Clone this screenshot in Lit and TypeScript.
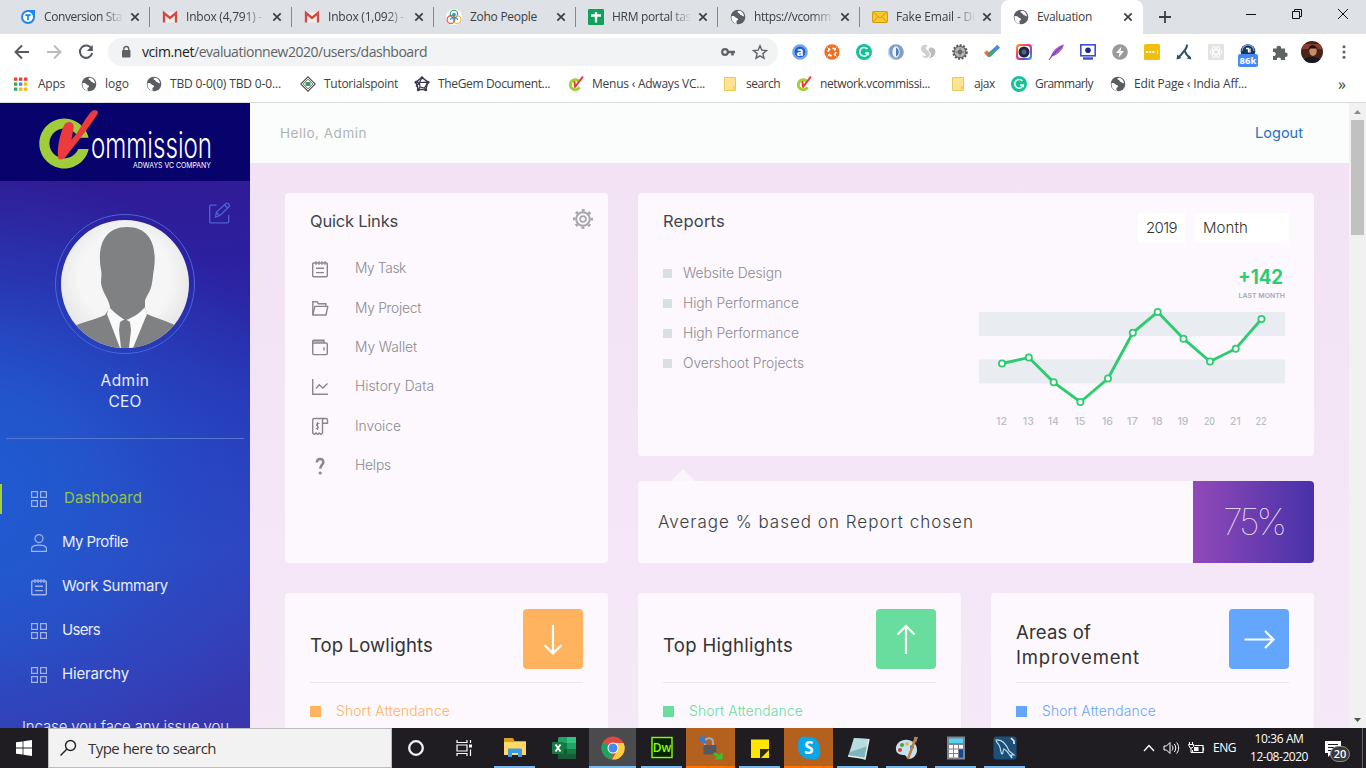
import { LitElement, html, svg, css } from "lit";
import { customElement, property } from "lit/decorators.js";

/* A single-line label whose tracking is computed so that it fills a given width. */
@customElement("fit-text")
class FitText extends LitElement {
  static styles = css`
    :host { display: inline-block; white-space: pre; line-height: 20px; flex: none; }
    .t { display: inline-block; }
  `;
  @property() text = "";
  @property({ type: Number }) w = 0;
  render() {
    return html`<span class="t">${this.text}</span>`;
  }
  updated() {
    const el = this.renderRoot.querySelector(".t") as HTMLElement;
    el.style.letterSpacing = "0px";
    const natural = el.getBoundingClientRect().width;
    if (this.w) el.style.letterSpacing = `${(this.w - natural) / this.text.length}px`;
  }
}

const fit = (text: string, w: number, cls = "") =>
  html`<fit-text class=${cls} .text=${text} .w=${w}></fit-text>`;
const icon = (w: number, h: number, body: unknown, cls = "") =>
  html`<svg class=${cls} width=${w} height=${h} viewBox="0 0 ${w} ${h}" fill="none">${body}</svg>`;

/* ---- favicons, 16px ---- */
const globe = svg`<circle cx="8" cy="8" r="7.3" fill="#5a5e63"/><path d="M1.500 7.200c2-.6 3.400.3 4.200 1.200.8.900 2.300.5 2.300 1.800s-1.600 1-1.600 2.200c0 .900.6 1.600.2 2.600-3-.6-5-3.200-5.100-6z" fill="#fff"/><path d="M8 2c-1 .8-.3 1.700.8 2 1.200.3.6 1.700 2 1.900 1.300.2 1.500 1.300 3.200 1.300-.2-2.600-2-4.700-4.300-5.400z" fill="#fff"/>`;
const tblue = svg`<path d="M1 8a7 7 0 0 1 7-7h7v7A7 7 0 1 1 1 8z" fill="#1b87f5"/><circle cx="8" cy="8" r="5" fill="#fff"/><path d="M5.300 6.200h5.400M8 6.200v5" stroke="#1b87f5" stroke-width="1.700"/>`;
const gmail = svg`<path d="M1 3h14v10.500H1z" fill="#efefef"/><path d="M2 13.500V4l6 5 6-5v9.500" stroke="#d5483d" stroke-width="2.300"/>`;
const zoho = svg`<circle cx="8" cy="8" r="8" fill="#fff"/><circle cx="8" cy="5" r="3.700" stroke="#2e9f5d" stroke-width="1.100"/><circle cx="5" cy="10.500" r="3.900" stroke="#e0534f" stroke-width="1.100"/><circle cx="11" cy="10.500" r="3.900" stroke="#efbf42" stroke-width="1.100"/><circle cx="8" cy="5.500" r="1.700" fill="#3889cf"/><path d="M4.500 11c0-3 7-3 7 0M8 7v6" stroke="#3889cf" stroke-width="1.100"/>`;
const sheet = svg`<rect width="16" height="16" rx="1" fill="#12a05c"/><path d="M3 6.500h10M8 3v10.500" stroke="#fff" stroke-width="2.300"/>`;
const mail = svg`<rect x=".5" y="2.500" width="15" height="11" rx="1" fill="#f8c929" stroke="#d59b12"/><path d="M1 3l7 6 7-6M1 13l5-5.500M15 13l-5-5.500" stroke="#c99320" stroke-width=".9"/>`;
const apps = svg`${[0, 1, 2].map((r) => [0, 1, 2].map((c) => svg`<rect x=${c * 5} y=${1.5 + r * 5} width="3.300" height="3.300" fill=${[["#ea4335", "#ea4335", "#ea4335"], ["#34a853", "#4285f4", "#fbbc05"], ["#34a853", "#fbbc05", "#fbbc05"]][r][c]}/>`))}`;
const tutor = svg`<path d="M8 .8L15.300 8 8 15.200.7 8z" fill="#fff" stroke="#4a4a4a" stroke-width="1.100"/><path d="M8 3.200L12.800 8 8 12.800 3.200 8z" stroke="#666"/><rect x="5.500" y="6" width="5" height="4" rx="1" fill="#3e9a58"/>`;
const gem = svg`<path d="M8 1.500l6 4.600-2.300 7.400H4.300L2 6.100z" stroke="#3c3950" stroke-width="1.500"/><path d="M8 1.500L5.500 6.500 6 11l-1.700 2.500M2 6.100l3.500.4L14 6.100M14 6.100L10.500 12 6 11M5.500 6.500l-3.500 4" stroke="#3c3950" stroke-width="1.200"/><circle cx="8" cy="1.700" r="1.500" fill="#3c3950"/><circle cx="14" cy="6.300" r="1.500" fill="#3c3950"/><circle cx="2" cy="6.300" r="1.500" fill="#3c3950"/><circle cx="4.300" cy="13.700" r="1.500" fill="#3c3950"/><circle cx="11.700" cy="13.700" r="1.500" fill="#3c3950"/>`;
const vcom = svg`<path d="M11.300 5.800A5 5 0 1 0 11.600 11.200" stroke="#a5cd39" stroke-width="3"/><path d="M6.500 6l.5 5L14.500 1.200" stroke="#e8393b" stroke-width="2" stroke-linecap="round" stroke-linejoin="round"/>`;
const folder = svg`<path d="M2.500 1.500h11v11.500h-2v1.500h-9z" fill="#ffe394" stroke="#eacb52"/><path d="M11.500 10.500h2v4h-2z" fill="#fbd65c" stroke="#eacb52" stroke-width=".8"/>`;
const gram = svg`<circle cx="8" cy="8" r="8" fill="#15c39a"/><path d="M11.300 5A4.300 4.300 0 1 0 12.200 9H9M12.200 9v2.300" stroke="#fff" stroke-width="1.500"/>`;
const cross = icon(12, 12, svg`<path d="M2.300 2.300l7.400 7.400M9.700 2.300L2.300 9.700" stroke="#3c4043" stroke-width="1.700"/>`);

const tabs: [unknown, string, number, boolean][] = [
  [tblue, "Conversion Sta", 78, true],
  [gmail, "Inbox (4,791) -", 76, true],
  [gmail, "Inbox (1,092) -", 76, true],
  [zoho, "Zoho People", 67, false],
  [sheet, "HRM portal tas", 79, true],
  [globe, "https://vcomm", 77, true],
  [mail, "Fake Email - Di", 79, true],
  [globe, "Evaluation", 55, false],
];
/* icon, label, label width, distance to the next bookmark */
const bookmarks: [unknown, string, number, number][] = [
  [apps, "Apps", 27, 67],
  [globe, "logo", 24, 65],
  [globe, "TBD 0-0(0) TBD 0-0...", 111, 154],
  [tutor, "Tutorialspoint", 74, 114],
  [gem, "TheGem Document...", 112, 154],
  [vcom, "Menus ‹ Adways VC...", 113, 154],
  [folder, "search", 34, 74],
  [vcom, "network.vcommissi...", 110, 154],
  [folder, "ajax", 21, 61],
  [gram, "Grammarly", 58, 99],
  [globe, "Edit Page ‹ India Aff...", 113, 137],
];

/* ---- toolbar extensions, 20px ---- */
const exts = [
  svg`<circle cx="10" cy="10" r="7.500" fill="#1a62d6" stroke="#9ec2ef"/><circle cx="10" cy="10" r="6.200" stroke="#fff" stroke-width=".7"/><text x="10" y="13.700" text-anchor="middle" font-size="11.500" font-weight="700" font-family="Open Sans" fill="#fff">a</text>`,
  svg`<circle cx="10" cy="10" r="7.700" fill="#f26f24"/><circle cx="10" cy="10" r="3.800" stroke="#fff" stroke-width="1.800" stroke-dasharray="3.600 2.370"/><path d="M5.500 5.500l1.500 1.500M14.500 5.500L13 7M5.500 14.500L7 13M14.500 14.500L13 13" stroke="#fff"/>`,
  svg`<circle cx="10" cy="10" r="8" fill="#15c39a"/><path d="M13.300 7A4.300 4.300 0 1 0 14.200 11H11M14.200 11v2.300" stroke="#fff" stroke-width="1.500"/>`,
  svg`<circle cx="10" cy="10" r="7.800" fill="#7d9fc6"/><ellipse cx="10" cy="10" rx="3.600" ry="5.800" fill="#eef4fb"/><path d="M10 5.500a5 5 0 0 1 0 9z" fill="#4f7bb0"/><path d="M3 7a8 8 0 0 0 5 10.500" stroke="#c7d9ec" stroke-width="1.500"/>`,
  svg`<path d="M10 3.500C6 1.500 2.500 4 3 7.500c.3 2 2 3 4 4.500 1.500 1 .5 3-1 2l-2-1c1 3 5 4 7 1.500s.5-4.500-1.500-6-2.500-3.500.5-5z" fill="#cfcfcf"/><path d="M12.500 5.500c3-.5 5.500 2 4.800 5.500-.6 3-3.300 5-6.300 5 2.500-2 2.500-4.500.5-6.500-1.500-1.500-1-3.500 1-4z" fill="#bdbdbd"/>`,
  svg`<circle cx="10" cy="10" r="6.600" fill="#b7b7b7" stroke="#555" stroke-width="2.400" stroke-dasharray="1.900 1.500"/><circle cx="10" cy="10" r="5.700" stroke="#666"/><circle cx="10" cy="10" r="2.300" fill="#555"/><path d="M10 5.500v9M5.500 10h9" stroke="#777"/>`,
  svg`<path d="M3.500 9.500l4 4.500" stroke="#f0703e" stroke-width="4"/><path d="M6.300 13.800L16.700 4.200" stroke="#4a8de0" stroke-width="4"/><path d="M6.300 13.800l5-4.600" stroke="#45a579" stroke-width="4"/>`,
  svg`<defs><linearGradient id="cam" x1="0" y1="0" x2="1" y2="1"><stop stop-color="#ff9d1e"/><stop offset=".45" stop-color="#ee2f79"/><stop offset=".75" stop-color="#5c5cf0"/><stop offset="1" stop-color="#23c6ca"/></linearGradient></defs><rect x="2" y="2" width="16" height="16" rx="3.500" fill="url(#cam)"/><rect x="4" y="4" width="12" height="12" rx="2.500" fill="#fff"/><circle cx="10" cy="10" r="5.500" fill="#202a3c"/><circle cx="10" cy="10" r="2.500" fill="#4e6482"/>`,
  svg`<path d="M4 17C6 9 11 4 18 2.500c-1 4-2.500 5.500-4 7-2 2.500-5 4-8 5z" fill="#a45fcd"/><path d="M3 18C7 12 11 8 16 4.500" stroke="#6d3299"/>`,
  svg`<rect x="2.800" y="2.800" width="14.400" height="11" stroke="#3e4fcf" stroke-width="1.600" fill="#fff"/><circle cx="10" cy="8.300" r="2.800" fill="#1d2a8c"/><path d="M5 16.500h10" stroke="#3e4fcf" stroke-width="2.400"/>`,
  svg`<circle cx="10" cy="10" r="7.800" fill="#9a9a9a"/><path d="M11.500 4.500L6 11h3.500l-1 4.700L14 9h-3.500z" fill="#fff"/>`,
  svg`<rect x="2" y="2" width="16" height="16" rx="1.500" fill="#f1bf10"/><path d="M4 10h8.500" stroke="#fff" stroke-width="2" stroke-dasharray="2 1.200"/><path d="M15.500 8v4" stroke="#fff"/>`,
  svg`<path d="M12.500 2.500c2 2.500-2 5.500-4 8.500L4 16.500M10.500 8.500l2 4 4 4" stroke="#29506d" stroke-width="2"/><path d="M2.500 17.500l.8-5 4 3.500zM17.500 17.500l-4.800-1 3-3z" fill="#29506d"/>`,
  svg`<rect x="2" y="2" width="16" height="16" fill="#e2e2e2"/><ellipse cx="10" cy="10" rx="6" ry="2.400" stroke="#fff"/><ellipse cx="10" cy="10" rx="6" ry="2.400" stroke="#fff" transform="rotate(60 10 10)"/><ellipse cx="10" cy="10" rx="6" ry="2.400" stroke="#fff" transform="rotate(120 10 10)"/>`,
  svg`<circle cx="10" cy="9.500" r="7.300" fill="#17355f"/><path d="M4 9a6 6 0 0 1 12 0" stroke="#7fa6d6" stroke-width="1.200"/><path d="M8 6.500h2.500v4M12 6.500v4" stroke="#fff" stroke-width="1.300"/>`,
  svg`<path d="M3 6.500h3.700a2.200 2.200 0 1 1 4.300 0h4v4a2.200 2.200 0 1 1 0 4.300V18h-4.200a2 2 0 1 0-3.900 0H3v-4a2.100 2.100 0 1 0 0-4z" fill="#5f6368"/>`,
  svg`<defs><clipPath id="me"><circle cx="11" cy="11" r="11"/></clipPath></defs><g clip-path="url(#me)"><rect width="22" height="22" fill="#4b2419"/><rect x="0" y="3" width="22" height="5" fill="#8b3c2b"/><ellipse cx="12" cy="10" rx="3.700" ry="5" fill="#c98d6b"/><path d="M7.500 9c0-6 8-6.500 9 0l-1-1.500-6 0z" fill="#1a1110"/><path d="M2 22c2-7 6-6 9-6s8 0 10 6z" fill="#141a23"/></g>`,
  svg`<circle cx="10" cy="4.800" r="1.500" fill="#5f6368"/><circle cx="10" cy="10" r="1.500" fill="#5f6368"/><circle cx="10" cy="15.200" r="1.500" fill="#5f6368"/>`,
];

/* ---- dashboard line icons, 18px, drawn in the current colour ---- */
const grid4 = svg`<g stroke="currentColor" stroke-width="1.200"><rect x="1.600" y="1.600" width="5.800" height="5.800"/><rect x="10.600" y="1.600" width="5.800" height="5.800"/><rect x="1.600" y="10.600" width="5.800" height="5.800"/><rect x="10.600" y="10.600" width="5.800" height="5.800"/></g>`;
const person = svg`<g stroke="currentColor" stroke-width="1.200"><circle cx="9" cy="4.600" r="4"/><path d="M1.600 17.400v-2.600c0-2.600 3-3.600 7.400-3.600s7.400 1 7.400 3.600v2.600z"/></g>`;
const notes = svg`<g stroke="currentColor" stroke-width="1.400"><rect x="1.700" y="3" width="14.600" height="13.800" rx="1"/><path d="M5 8.300h8M5 12.600h8"/><path d="M5 1v4M8 1v4M11 1v4M14 1v4" stroke-width="1.100"/></g>`;
const folderOpen = svg`<g stroke="currentColor" stroke-width="1.400"><path d="M1.800 16V2.700h4.500l1 2h7.500v2.500"/><path d="M1.800 16l2-8.600h13L15 16z" stroke-linejoin="round"/></g>`;
const wallet = svg`<g stroke="currentColor" stroke-width="1.400"><rect x="1.700" y="5" width="14.600" height="11.600" rx="1.300"/><path d="M1.700 6.500V3.200c0-.6.4-1 1-1h10.300V5M13 9.300v3.200"/><path d="M2 3.800h11" stroke-width="1.800" opacity=".6"/></g>`;
const chartIc = svg`<g stroke="currentColor" stroke-width="1.400"><path d="M1.700 1v15.300H17"/><path d="M5 10.500l3.200-3.700 3.600 3.200L16.500 5.500"/></g>`;
const invoice = svg`<g stroke="currentColor" stroke-width="1.400"><path d="M1.700 16V3c0-.9.600-1.500 1.500-1.500H15c1 0 1.500.7 1.500 1.700v3h-5V16l-1.700 1.600L8.200 16l-1.600 1.600L5 16l-1.600 1.600z"/><path d="M11.500 6V3.500c0-1 .4-2 1.500-2"/><path d="M8.500 6.500H6.300c-1 0-1 2.400 0 2.400s1.300 2.600.2 2.600H4.700M6.500 5v8" stroke-width="1.200"/></g>`;
const help = svg`<path d="M5.800 5.500C6 .8 12.500.9 12.300 5.200 12.200 8 9.300 8 9.300 11.800" stroke="currentColor" stroke-width="2.500"/><circle cx="9.200" cy="16" r="1.600" fill="currentColor"/>`;

const nav: [unknown, string, number][] = [
  [grid4, "Dashboard", 78],
  [person, "My Profile", 66],
  [notes, "Work Summary", 106],
  [grid4, "Users", 38],
  [grid4, "Hierarchy", 67],
];
const links: [unknown, string, number][] = [
  [notes, "My Task", 51],
  [folderOpen, "My Project", 66],
  [wallet, "My Wallet", 62],
  [chartIc, "History Data", 79],
  [invoice, "Invoice", 46],
  [help, "Helps", 36],
];
const reports: [string, number][] = [
  ["Website Design", 99],
  ["High Performance", 116],
  ["High Performance", 116],
  ["Overshoot Projects", 121],
];
const points: [number, number][] = [
  [27, 103.5], [53.8, 97.5], [78.7, 122.3], [105.4, 142], [133, 118.5], [157.8, 72.8],
  [182.7, 52], [208.5, 78.7], [235, 101.5], [260.7, 88.7], [286.5, 59],
];

/* ---- taskbar icons, 26px ---- */
const task: [string, unknown][] = [
  ["run", svg`<path d="M2 3h9l1.500 3H24v6H2z" fill="#dd9e25"/><path d="M2 7h22v13H2z" fill="#ffd867"/><path d="M6 22v-7c0-1 .6-1.500 1.500-1.500h11c1 0 1.500.5 1.500 1.500v7h-4v-4h-6v4z" fill="#3d9be0"/>`],
  ["", svg`<rect x="7" y="2" width="18" height="22" rx="1.500" fill="#21a366"/><path d="M16 2h9v6h-9z" fill="#33c481"/><path d="M7 8h9v6H7z" fill="#107c41"/><path d="M7 14h18v10H7z" fill="#185c37"/><path d="M16 14h9v5h-9z" fill="#107c41"/><rect x="1" y="7" width="12" height="12" rx="1" fill="#107c41"/><path d="M4.500 9.500l5 7M9.500 9.500l-5 7" stroke="#fff" stroke-width="1.900"/>`],
  ["run active", svg`<circle cx="13" cy="13" r="11.500" fill="#dd4b3e"/><path d="M13 13L3 7.200A11.500 11.500 0 0 0 12 24.500z" fill="#1da362"/><path d="M12 24.500A11.500 11.500 0 0 0 23.500 8H13l4 8z" fill="#ffcd41"/><circle cx="13" cy="13" r="5.500" fill="#fff"/><circle cx="13" cy="13" r="4.500" fill="#4688f1"/>`],
  ["run", svg`<rect x="3" y="2.500" width="20" height="20" fill="#072401" stroke="#8f0" stroke-width="1.400"/><text x="13" y="16.500" text-anchor="middle" font-size="12" font-family="Open Sans" font-weight="600" fill="#8f0">Dw</text>`],
  ["alert", svg`<path d="M7 12V7c0-5 8-5 8 0v5" stroke="#a5a7ab" stroke-width="2.200"/><rect x="5.500" y="10" width="13" height="9.500" rx="1" fill="#55585e"/><path d="M1.500 1.500h7l-2.300 2.300L9 7 7 9 4 6l-2.500 2.500z" fill="#3279dc"/><path d="M24.500 24.500h-8l2.500-2.500-4-3 2-2 4 3 3.500-3z" fill="#35c22d"/>`],
  ["run short", svg`<path d="M4 4.500h18V23H4z" fill="#ffe600"/><path d="M13 23v-9h9v9z" fill="#2e2a18"/><path d="M13 23v-9h9z" fill="#3a361c"/><path d="M13 14h9l-9 9z" fill="#2e2a18"/><path d="M14 23l8-8v8z" fill="#ffe600"/>`],
  ["alert", svg`<path d="M2 8a6.500 6.500 0 0 1 9-6 11 11 0 0 1 12.700 13A6.500 6.500 0 0 1 15 23.700 11 11 0 0 1 2.300 11z" fill="#08a7ea"/><text x="13" y="19" text-anchor="middle" font-size="17" font-family="Open Sans" font-weight="700" fill="#fff">S</text>`],
  ["run", svg`<path d="M9 3l15 1-4 20-17-3z" fill="#7eb6bd"/><path d="M9 3l15 1-1.500 7L5 17z" fill="#b8dde0"/><path d="M3 21l14 2 3 1 4-20" stroke="#e8eeee" stroke-width="1.400"/>`],
  ["run", svg`<path d="M2 15C1 8 8 4 14 5s9 5 9 10-4 9-8 9c-3 0-2-4-5-4S2.500 19 2 15z" fill="#c6e2f0"/><circle cx="6" cy="15" r="2" fill="#cf3e33"/><circle cx="8" cy="10" r="2" fill="#5a9b45"/><circle cx="13" cy="9" r="1.800" fill="#efb52e"/><circle cx="18" cy="12" r="2" fill="#3472bd"/><path d="M22 2l-8 22" stroke="#c17d3c" stroke-width="2.500"/><path d="M20 2h4l-2 6z" fill="#a8836a"/>`],
  ["run", svg`<rect x="4" y="1.500" width="18" height="23" fill="#7e858f"/><rect x="6" y="3.500" width="14" height="4.500" fill="#53d4f4"/><g fill="#fff"><rect x="6" y="10" width="4" height="3.500"/><rect x="11" y="10" width="4" height="3.500"/><rect x="16" y="10" width="4" height="3.500"/><rect x="6" y="14.500" width="4" height="3.500"/><rect x="11" y="14.500" width="4" height="3.500"/><rect x="6" y="19" width="4" height="3.500"/><rect x="11" y="19" width="4" height="3.500"/></g><rect x="16" y="14.500" width="4" height="8" fill="#124a92"/>`],
  ["run", svg`<rect x="1.500" y="1.500" width="23" height="23" rx="3" fill="#1c5078"/><path d="M4 5c7-1 11 6 13 11l5 4-3 0 1 3c-3-3-4-7-8-9-2 2 0 4-2 5-2-2-1-6-3-9S4 7 4 5z" stroke="#c6dff0" stroke-width="1.100"/><path d="M19 3l3 3v3" stroke="#fff" stroke-width="1.500"/>`],
];

@customElement("app-root")
class AppRoot extends LitElement {
  static styles = css`
    :host { display: flex; flex-direction: column; width: 1366px; height: 768px; overflow: hidden; background: #fff; font-family: "Open Sans", "Noto Sans", sans-serif; font-size: 12px; color: #3c4043; }
    * { box-sizing: border-box; }
    svg { flex: none; display: block; }
    /* window chrome */
    .strip { display: flex; height: 34px; flex: none; padding-left: 8px; background: #dee1e6; }
    .tab { display: flex; width: 142px; height: 34px; flex: none; align-items: center; padding-left: 12px; }
    .tab .sep { width: 1px; height: 20px; margin-left: 8px; background: #85888d; flex: none; }
    .tab.nosep .sep { visibility: hidden; }
    .tab.on { background: #fff; border-radius: 8px 8px 0 0; margin-left: -1px; }
    .cap { width: 80px; height: 20px; margin: 0 5px 0 8px; overflow: hidden; flex: none; }
    .cap.fade { -webkit-mask-image: linear-gradient(90deg, #000 58px, transparent 80px); mask-image: linear-gradient(90deg, #000 58px, transparent 80px); }
    .plus { margin: 10px 0 0 15px; }
    .win { display: flex; gap: 34px; margin: 8px 17px 0 auto; }
    .tools { display: flex; height: 36px; flex: none; align-items: center; }
    .navs { display: flex; width: 108px; gap: 14px; padding-left: 13px; }
    .omni { display: flex; align-items: center; width: 670px; height: 28px; border-radius: 14px; background: #f1f3f4; padding: 0 10px 0 13px; font-size: 14px; color: #5f6368; }
    .omni .host { color: #202124; margin-left: 11px; }
    .omni .key { margin-left: auto; margin-right: 16px; }
    .exts { display: flex; padding-left: 6px; }
    .ext { display: flex; width: 32px; justify-content: center; align-items: center; position: relative; }
    .badge { position: absolute; left: 6px; top: 13px; width: 20px; height: 13px; border-radius: 2px; background: #4688f4; color: #fff; font-size: 9.500px; font-weight: 700; line-height: 13px; text-align: center; }
    .marks { display: flex; height: 33px; flex: none; padding: 0 0 5px 14px; align-items: center; border-bottom: 1px solid #dadce0; }
    .mark { display: flex; align-items: center; gap: 8px; flex: none; }
    .more { margin-left: 91px; font-size: 16px; }
    /* page */
    .page { display: flex; height: 625px; flex: none; overflow: hidden; font-family: Inter, sans-serif; }
    .side { width: 250px; flex: none; height: 625px; overflow: hidden; display: flex; flex-direction: column; align-items: center; color: #e8ecfb; background: radial-gradient(ellipse 330px 330px at -30px 62%, #1f5bd2 0%, rgba(33, 91, 208, 0.85) 30%, rgba(36, 86, 204, 0.4) 65%, rgba(40, 80, 200, 0) 100%), linear-gradient(174deg, #31198f 8%, #2c20a0 28%, #273ab9 52%, #2f44c0 72%, #3a36ad 100%); }
    .brand { width: 250px; height: 78px; background: #08026c; flex: none; }
    .edit { align-self: flex-end; margin: 21px 19px 0 0; color: #4d62d6; }
    .ring { width: 140px; height: 140px; margin-top: -10px; border: 1px solid #4668dc; border-radius: 50%; padding: 5px; flex: none; }
    .who { display: flex; flex-direction: column; align-items: center; margin-top: 16px; font-size: 15.500px; }
    .who fit-text { line-height: 21px; }
    .rule { width: 238px; height: 1px; background: #5577d4; margin-top: 26px; flex: none; }
    .nav { width: 250px; padding-top: 38px; font-size: 15px; }
    .item { display: flex; height: 44px; align-items: center; border-left: 2px solid transparent; padding-left: 28px; gap: 14px; }
    .item fit-text { margin-top: -2px; }
    .item svg { color: #a2b3e9; }
    .item.on { height: 30px; margin: 7px 0; border-color: #a4ce3a; color: #96c447; gap: 16px; }
    .note { align-self: flex-start; margin: 20px 0 0 22px; font-size: 15px; font-weight: 300; }
    .main { width: 1099px; flex: none; background: linear-gradient(#f2e2f4, #f5e8f7); }
    .top { display: flex; height: 60px; align-items: center; justify-content: space-between; padding: 0 46px 0 30px; background: #fbfcfc; }
    .hello { font-size: 13.500px; color: #aeb4b6; }
    .logout { font-size: 14.500px; color: #1d72c5; }
    .board { display: grid; grid-template-columns: repeat(3, 323px); grid-template-rows: 370px 200px; gap: 30px; padding: 30px 35px; }
    .card { border-radius: 4px; background: #fcf8fd; }
    .ql { padding: 16px 14px 0 25px; }
    .head { display: flex; justify-content: space-between; color: #42464b; font-size: 16.500px; }
    .head fit-text { line-height: 24px; }
    .gear { color: #a7a7aa; margin-top: -1px; }
    .ql-list { padding-top: 16px; }
    .ql-row { display: flex; height: 39.400px; align-items: center; gap: 25px; font-size: 13.800px; color: #8b8b90; font-weight: 300; }
    .ql-row svg { color: #88888c; }
    .ql-row fit-text { margin-top: -1px; }
    .right { grid-column: span 2; display: grid; grid-template-rows: 263px 82px; row-gap: 25px; }
    .rep { display: flex; justify-content: space-between; padding: 16px 25px 0; color: #42464b; }
    .rep-list { display: flex; flex-direction: column; gap: 10px; padding-top: 30px; font-size: 13.800px; color: #8b8b90; font-weight: 300; }
    .rep-row { display: flex; align-items: center; gap: 11px; height: 20px; }
    .sq { width: 9px; height: 9px; background: #d9dfe3; }
    .rep-right { display: flex; flex-direction: column; align-items: flex-end; padding-top: 4px; }
    .sels { display: flex; gap: 10px; }
    .sel { height: 30px; background: #fff; padding: 5px 8px; font-size: 15px; color: #333; font-weight: 300; }
    .sel.year { width: 47px; }
    .sel.month { width: 94px; }
    .chart { margin: 17px -6px 0 0; }
    .avg { display: flex; align-items: center; justify-content: space-between; padding-left: 20px; position: relative; font-size: 17px; color: #3a3e43; font-weight: 300; }
    .avg::before { content: ""; position: absolute; left: 33px; top: -12px; border: 12px solid transparent; border-top: 0; border-bottom-color: #fbf5fb; }
    .pct { display: flex; width: 121px; height: 82px; align-items: center; justify-content: center; border-radius: 0 4px 4px 0; background: linear-gradient(90deg, #9149b9, #4831a8); color: #f3e9fb; font-size: 36px; font-weight: 100; }
    .tile { padding: 16px 25px 0; }
    .tile-head { display: flex; justify-content: space-between; height: 74px; border-bottom: 1px solid #ebe6ec; padding-bottom: 13px; }
    .tile-title { display: flex; flex-direction: column; justify-content: center; height: 60px; margin-top: 6px; font-size: 18.500px; color: #333; }
    .tile-title fit-text { line-height: 25px; }
    .go { width: 60px; height: 60px; border-radius: 4px; flex: none; }
    .tile-row { display: flex; align-items: center; gap: 15px; padding-top: 18px; font-size: 13.800px; font-weight: 300; }
    .dot { width: 11px; height: 11px; background: currentColor; }
    .orange { color: #ffb35f; } .green { color: #69dd9e; } .blue { color: #64a6fd; }
    .orange .go { background: #ffb35f; } .green .go { background: #69dd9e; } .blue .go { background: #64a6fd; }
    .scroll { width: 17px; background: #f1f1f1; display: flex; flex-direction: column; align-items: center; justify-content: space-between; flex: none; }
    /* taskbar */
    .task { display: flex; height: 40px; flex: none; background: #1f1d21; color: #fff; align-items: stretch; }
    .start { display: flex; width: 48px; flex: none; align-items: center; justify-content: center; }
    .find { display: flex; width: 344px; flex: none; align-items: center; background: #f2f2f2; border: 1px solid #bdbdbd; padding-left: 10px; gap: 11px; font-size: 15px; color: #333; }
    .running { display: flex; margin-left: 2px; }
    .cell { display: flex; width: 49px; flex: none; justify-content: center; padding-top: 7px; border-bottom: 2px solid transparent; }
    .run { width: 41px; margin: 0 4px; border-bottom-color: #76b9ed; }
    .active { width: 47px; margin: 0 1px; background: #4b4a4d; }
    .alert { background: #b4611f; border-bottom-color: #ff7300; }
    .tray { display: flex; align-items: center; margin-left: auto; gap: 8px; }
    .clock { display: flex; flex-direction: column; align-items: center; width: 60px; margin-left: 5px; }
    .clock fit-text { line-height: 18px; }
    .acts { position: relative; width: 30px; height: 28px; margin-left: 7px; padding-top: 6px; }
    .num { position: absolute; left: 6px; top: 12px; width: 20px; height: 16px; border-radius: 9px; border: 1px solid #8d8d8f; background: #39383b; font-size: 11px; line-height: 14px; text-align: center; font-weight: 600; }
    .peek { width: 4px; height: 40px; border-left: 1px solid #67666a; }
  `;

  private chrome() {
    return html`
      <div class="strip">
        ${tabs.map(([ic, name, w, fade], i) => html`
          <div class="tab ${i === 7 ? "on" : ""} ${i > 5 ? "nosep" : ""}">
            ${icon(16, 16, ic)}
            <div class="cap ${fade ? "fade" : ""}">${fit(name, w)}</div>
            ${cross}<span class="sep"></span>
          </div>`)}
        ${icon(14, 14, svg`<path d="M7 1v12M1 7h12" stroke="#3c4043" stroke-width="1.800"/>`, "plus")}
        <div class="win">
          ${icon(12, 12, svg`<path d="M1 6.500h10" stroke="#111"/>`)}
          ${icon(12, 12, svg`<path d="M1.500 3.500h7v7h-7zM3.500 3.500v-2h7v7h-2" stroke="#111"/>`)}
          ${icon(12, 12, svg`<path d="M1 1l10 10M11 1L1 11" stroke="#111"/>`)}
        </div>
      </div>
      <div class="tools">
        <div class="navs">
          ${icon(18, 18, svg`<path d="M16 9H3M9 2.500L2.500 9 9 15.500" stroke="#55595e" stroke-width="1.900"/>`)}
          ${icon(18, 18, svg`<path d="M2 9h13M9 2.500L15.500 9 9 15.500" stroke="#babcbe" stroke-width="1.900"/>`)}
          ${icon(18, 18, svg`<path d="M14.500 5.500A6.200 6.200 0 1 0 15.200 10" stroke="#55595e" stroke-width="2"/><path d="M15.800 2v6h-6z" fill="#55595e"/>`)}
        </div>
        <div class="omni">
          ${icon(10, 14, svg`<rect x="1" y="5" width="8.500" height="7.500" rx="1" fill="#5f6368"/><path d="M2.800 5.500V4c0-3.300 4.900-3.300 4.900 0v1.500" stroke="#5f6368" stroke-width="1.400"/>`)}
          ${fit("vcim.net", 52, "host")}${fit("/evaluationnew2020/users/dashboard", 233)}
          ${icon(16, 16, svg`<circle cx="5" cy="8" r="2.800" stroke="#5f6368" stroke-width="2.200"/><path d="M8 8h7M12.500 8v3.500" stroke="#5f6368" stroke-width="2.500"/>`, "key")}
          ${icon(16, 16, svg`<path d="M8 1.800l1.800 4.300 4.700.4-3.600 3.100 1.100 4.600L8 11.800l-4 2.400 1.100-4.600L1.500 6.500l4.700-.4z" stroke="#5f6368" stroke-width="1.400"/>`)}
        </div>
        <div class="exts">
          ${exts.map((e, i) => html`<div class="ext">${i === 16 ? icon(22, 22, e) : icon(20, 20, e)}${i === 14 ? html`<span class="badge">86k</span>` : ""}</div>`)}
        </div>
      </div>
      <div class="marks">
        ${bookmarks.map(([ic, name, w, step]) => html`<div class="mark" style="width:${step}px">${icon(16, 16, ic)}${fit(name, w)}</div>`)}
        <span class="more">»</span>
      </div>`;
  }

  private sidebar() {
    return html`
      <div class="side">
        <div class="brand">
          ${icon(250, 78, svg`
            <path d="M88.600 34.700A25 25 0 1 0 88.700 46H78.300A15 15 0 1 1 78.300 34.700z" fill="#a2cd3a"/>
            <path d="M58 54C57 45 60 30 64.500 21.500c2.500-4 9.500-3.500 9.200 2.500L71.500 36.500C78 31 84 16 91.500 8.500 94 6 99.500 7 97.500 11 92 20 80 36 71 47c-4 5-6 9-9.500 9.500-2.500 0-3.500-.5-3.500-2.500z" fill="#eb3b3c"/>
            <text x="91" y="54.500" font-family="Inter" font-weight="300" font-size="36" fill="#fff" textLength="121" lengthAdjust="spacingAndGlyphs">ommission</text>
            <text x="133" y="64.500" font-family="Inter" font-size="7.500" fill="#fff" textLength="78" lengthAdjust="spacingAndGlyphs">ADWAYS VC COMPANY</text>`)}
        </div>
        ${icon(23, 22, svg`<g stroke="currentColor" stroke-width="1.300"><path d="M8.500 3.200H2.700c-.6 0-1 .4-1 1v15.600c0 .6.4 1 1 1h17c.6 0 1-.4 1-1V13"/><path d="M7.500 15l1-5L18 1.600c1.600-1.200 4.400 1 3.200 2.900L12 13.500zM16.500 3l3.500 3.300M8.500 10.500l3 3"/></g>`, "edit")}
        <div class="ring">
          ${icon(128, 128, svg`
            <defs>
              <clipPath id="face"><circle cx="64" cy="64" r="64"/></clipPath>
              <radialGradient id="glow" cx=".5" cy=".45" r=".55"><stop offset=".65" stop-color="#f6f6f6"/><stop offset="1" stop-color="#e5e5e6"/></radialGradient>
            </defs>
            <g clip-path="url(#face)">
              <rect width="128" height="128" fill="url(#glow)"/>
              <path d="M0 112c16-9 34-12 44-17l5-8c-1-8-8-15-9-24 0-5 1-9 0-13C36 28 42 7 66 7s30 20 27 42c-1 4-1 9-2 14-1 9-6 12-8 21l3 10c10 5 26 8 42 19v15H0z" fill="#808183"/>
              <path d="M48 87l16 13 20-13 2 7-14 34H59L46 94z" fill="#fafafa"/>
              <path d="M49 80v8c6 6 11 10 16 12 6-2 13-6 19-13v-7z" fill="#808183"/>
              <path d="M59 102l5-3 5 3 1 8-2 18h-8l-2-18z" fill="#808183"/>
            </g>`)}
        </div>
        <div class="who">${fit("Admin", 49)}${fit("CEO", 33)}</div>
        <div class="rule"></div>
        <div class="nav">
          ${nav.map(([ic, name, w], i) => html`<div class="item ${i ? "" : "on"}">${icon(18, 18, ic)}${fit(name, w)}</div>`)}
        </div>
        <div class="note">${fit("Incase you face any issue you", 207)}</div>
      </div>`;
  }

  private tile(cls: string, title: [string, number][], arrow: unknown) {
    return html`
      <div class="card tile ${cls}">
        <div class="tile-head">
          <div class="tile-title">${title.map(([s, w]) => fit(s, w))}</div>
          <div class="go">${icon(60, 60, arrow)}</div>
        </div>
        <div class="tile-row"><span class="dot"></span>${fit("Short Attendance", 114)}</div>
      </div>`;
  }

  private chart() {
    return html`${icon(320, 175, svg`
      <rect x="4" y="52" width="306" height="24" fill="#e9edf1"/>
      <rect x="4" y="99.500" width="306" height="24" fill="#e9edf1"/>
      <polyline points=${points.map((p) => p.join()).join(" ")} stroke="#2ecc71" stroke-width="2.900"/>
      ${points.map(([x, y], i) => svg`
        <circle cx=${x} cy=${y} r="3.100" fill="#fff" stroke="#2ecc71" stroke-width="1.800"/>
        <text x=${x - 0.5} y="165" text-anchor="middle" font-family="Inter" font-size="10" font-weight="500" fill="#b9bec6" textLength="11" lengthAdjust="spacingAndGlyphs">${12 + i}</text>`)}
      <text x="263" y="24" font-family="Inter" font-size="19.500" font-weight="700" fill="#2ecc71" textLength="45" lengthAdjust="spacingAndGlyphs">+142</text>
      <text x="263.500" y="38" font-family="Inter" font-size="6.500" font-weight="600" fill="#a3aab4" textLength="46.500" lengthAdjust="spacingAndGlyphs">LAST MONTH</text>`, "chart")}`;
  }

  private main() {
    return html`
      <div class="main">
        <div class="top">${fit("Hello, Admin", 87, "hello")}${fit("Logout", 48, "logout")}</div>
        <div class="board">
          <div class="card ql">
            <div class="head">
              ${fit("Quick Links", 88)}
              ${icon(22, 22, svg`<circle cx="11" cy="11" r="8.800" stroke="currentColor" stroke-width="2.400" stroke-dasharray="3 3.910" stroke-dashoffset="1.500"/><circle cx="11" cy="11" r="6.800" stroke="currentColor" stroke-width="2"/><circle cx="11" cy="11" r="2.900" stroke="currentColor" stroke-width="1.700"/>`, "gear")}
            </div>
            <div class="ql-list">
              ${links.map(([ic, name, w]) => html`<div class="ql-row">${icon(20, 18, svg`<g transform="translate(1 0)">${ic}</g>`)}${fit(name, w)}</div>`)}
            </div>
          </div>
          <div class="right">
            <div class="card rep">
              <div>
                <div class="head">${fit("Reports", 62)}</div>
                <div class="rep-list">${reports.map(([s, w]) => html`<div class="rep-row"><span class="sq"></span>${fit(s, w)}</div>`)}</div>
              </div>
              <div class="rep-right">
                <div class="sels">
                  <div class="sel year">${fit("2019", 31)}</div>
                  <div class="sel month">${fit("Month", 45)}</div>
                </div>
                ${this.chart()}
              </div>
            </div>
            <div class="card avg">
              ${fit("Average % based on Report chosen", 316)}
              <div class="pct">${fit("75%", 61)}</div>
            </div>
          </div>
          ${this.tile("orange", [["Top Lowlights", 123]], svg`<path d="M30 16v28M21.500 36l8.500 8.500 8.500-8.500" stroke="#fff" stroke-width="2.200"/>`)}
          ${this.tile("green", [["Top Highlights", 130]], svg`<path d="M30 45V17M21.500 25.500L30 17l8.500 8.500" stroke="#fff" stroke-width="2.200"/>`)}
          ${this.tile("blue", [["Areas of", 75], ["Improvement", 124]], svg`<path d="M15.500 30.500H44M36 22l8.500 8.500L36 39" stroke="#fff" stroke-width="2.200"/>`)}
        </div>
      </div>
      <div class="scroll">
        ${icon(17, 132, svg`<path d="M5 11l3.500-4 3.500 4z" fill="#8b8b8b"/><rect x="2" y="17" width="13" height="115" fill="#c1c1c1"/>`)}
        ${icon(17, 17, svg`<path d="M5 7h7l-3.500 4z" fill="#505050"/>`)}
      </div>`;
  }

  private taskbar() {
    return html`
      <div class="task">
        <div class="start">${icon(16, 16, svg`<path d="M0 2.300L6.600 1.400V7.600H0zM7.400 1.300L16 0v7.600H7.400zM0 8.400h6.600v6.200L0 13.700zM7.400 8.400H16V16l-8.600-1.300z" fill="#fff"/>`)}</div>
        <div class="find">
          ${icon(18, 18, svg`<circle cx="11.500" cy="6.500" r="5" stroke="#222" stroke-width="1.400"/><path d="M8 10L1.500 16.500" stroke="#222" stroke-width="1.400"/>`)}
          ${fit("Type here to search", 128)}
        </div>
        <div class="start">${icon(18, 18, svg`<circle cx="9" cy="9" r="6.800" stroke="#f4f4f4" stroke-width="2.300"/>`)}</div>
        <div class="start">${icon(18, 18, svg`<path d="M2 1v2.500h10V1M2 17v-2.500h10V17M2 6h10v6H2zM15.500 1v3M15.500 10.500V17" stroke="#fff" stroke-width="1.200"/><rect x="14" y="5.500" width="3" height="3" fill="#fff"/>`)}</div>
        <div class="running">
          ${task.map(([cls, ic]) => html`<div class="cell ${cls}">${icon(26, 26, ic)}</div>`)}
        </div>
        <div class="tray">
          ${icon(12, 8, svg`<path d="M1 7l5-5.500L11 7" stroke="#fff" stroke-width="1.300"/>`)}
          ${icon(17, 14, svg`<path d="M1 5h2.500L7 1.500v11L3.500 9H1z" stroke="#fff"/><path d="M9 4.500c1.300 1.500 1.300 3.500 0 5M11.300 3c2 2.500 2 5.500 0 8M13.700 1.500c2.600 3.500 2.600 7.500 0 11" stroke="#fff"/>`)}
          ${icon(17, 14, svg`<path d="M6.500 4.500h8.500v7H4.500V9M15.500 6.500v3" stroke="#fff" stroke-width="1.200"/><rect x="6" y="6" width="4.500" height="4" fill="#fff"/><path d="M1.500 1v2M4.500 1v2M.5 3.500h5v2L4 7H2z M3 7v4.500h2" stroke="#fff"/>`)}
          ${fit("ENG", 23)}
          <div class="clock">${fit("10:36 AM", 49)}${fit("12-08-2020", 58)}</div>
          <div class="acts">
            ${icon(18, 17, svg`<path d="M1 1h16v12H8l-4 4v-4H1z" fill="#fff"/><path d="M4 4.500h10M4 7.500h10M4 10.500h6" stroke="#1f1d21" stroke-width="1.200"/>`)}
            <span class="num">20</span>
          </div>
          <div class="peek"></div>
        </div>
      </div>`;
  }

  render() {
    return html`${this.chrome()}<div class="page">${this.sidebar()}${this.main()}</div>${this.taskbar()}`;
  }
}
